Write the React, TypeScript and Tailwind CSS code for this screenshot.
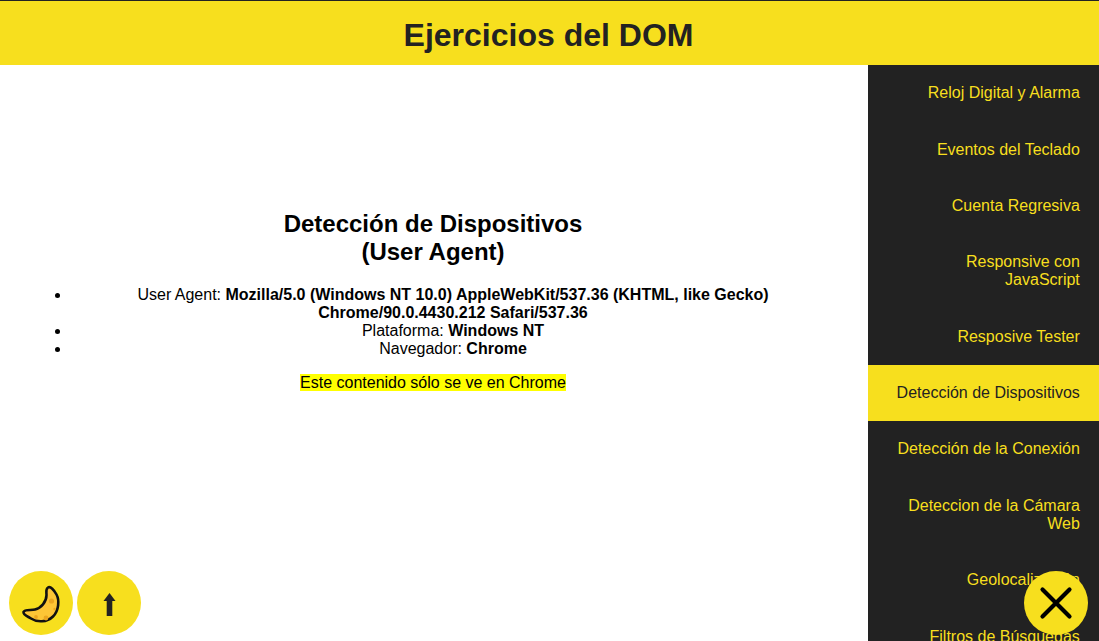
const links = [
  "Reloj Digital y Alarma",
  "Eventos del Teclado",
  "Cuenta Regresiva",
  "Responsive con JavaScript",
  "Resposive Tester",
  "Detección de Dispositivos",
  "Detección de la Conexión",
  "Deteccion de la Cámara Web",
  "Geolocalización",
  "Filtros de Búsquedas",
  "Sorteo Digital",
];

export default function App() {
  return (
    <div className="relative h-screen overflow-hidden bg-white text-black font-['Liberation_Sans',Arial,sans-serif] text-base leading-[18px]">
      <header className="h-[65px] bg-[#f7df1e] border-t border-[#222] flex items-center justify-center pt-[4px] pr-[2px]">
        <h1 className="text-[32px] leading-[37px] font-bold text-[#222]">Ejercicios del DOM</h1>
      </header>
      <div className="flex items-start">
        <main className="w-[868px] pl-[31px] pr-[33px] pt-[145px] text-center">
          <h2 className="text-2xl leading-[28px] font-bold">
            Detección de Dispositivos
            <br />
            (User Agent)
          </h2>
          <ul className="list-disc pl-10 mb-4 mt-[20px]">
            <li>
              User Agent: <b>Mozilla/5.0 (Windows NT 10.0) AppleWebKit/537.36 (KHTML, like Gecko) Chrome/90.0.4430.212 Safari/537.36</b>
            </li>
            <li>
              Plataforma: <b>Windows NT</b>
            </li>
            <li>
              Navegador: <b>Chrome</b>
            </li>
          </ul>
          <p>
            <mark className="bg-[#ffff00] text-black">Este contenido sólo se ve en Chrome</mark>
          </p>
        </main>
        <nav className="w-[231px] bg-[#222] flex flex-col">
          {links.map((l) => (
            <a
              key={l}
              href="#"
              className={
                l === "Detección de Dispositivos"
                  ? "block py-[19.2px] px-[19.2px] text-right bg-[#f7df1e] text-[#222]"
                  : "block py-[19.2px] px-[19.2px] text-right text-[#f7df1e]"
              }
            >
              {l}
            </a>
          ))}
        </nav>
      </div>

      <button className="absolute left-[9px] top-[571px] w-16 h-16 rounded-full bg-[#f7df1e]" aria-label="tema">
        <svg viewBox="0 0 64 64" className="w-16 h-16">
          <path
            d="M14.5 41C14 44 19 45.5 22 47.5C28 51.5 38 51.5 44 45.5C50 39.5 50.5 29 47.5 23.5C45 19 41.5 15 39 16.5C36.5 18 37.5 21 37.5 24C37.5 31 32 37 26 38.5C22 39.5 15.5 38 14.5 41Z"
            fill="#fdc536"
            stroke="#111"
            strokeWidth="2.6"
            strokeLinejoin="round"
          />
          <circle cx="42.5" cy="30" r="2.6" fill="#eba51f" />
          <circle cx="27" cy="46" r="1.9" fill="#eba51f" />
          <circle cx="37" cy="47" r="2.4" fill="#eba51f" />
          <circle cx="45.5" cy="38" r="1.2" fill="#eba51f" />
        </svg>
      </button>
      <button className="absolute left-[77px] top-[571px] w-16 h-16 rounded-full bg-[#f7df1e]" aria-label="subir">
        <svg viewBox="0 0 64 64" className="w-16 h-16">
          <path d="M32.5 22L38.5 30H35.3V45H29.7V30H26.5Z" fill="#222" />
        </svg>
      </button>
      <button className="absolute left-[1024px] top-[571px] w-16 h-16 rounded-full bg-[#f7df1e]" aria-label="menu">
        <svg viewBox="0 0 64 64" className="w-16 h-16">
          <path d="M18.5 18.5L45.5 45.5M45.5 18.5L18.5 45.5" stroke="#000" strokeWidth="4.2" strokeLinecap="round" fill="none" />
        </svg>
      </button>
    </div>
  );
}
